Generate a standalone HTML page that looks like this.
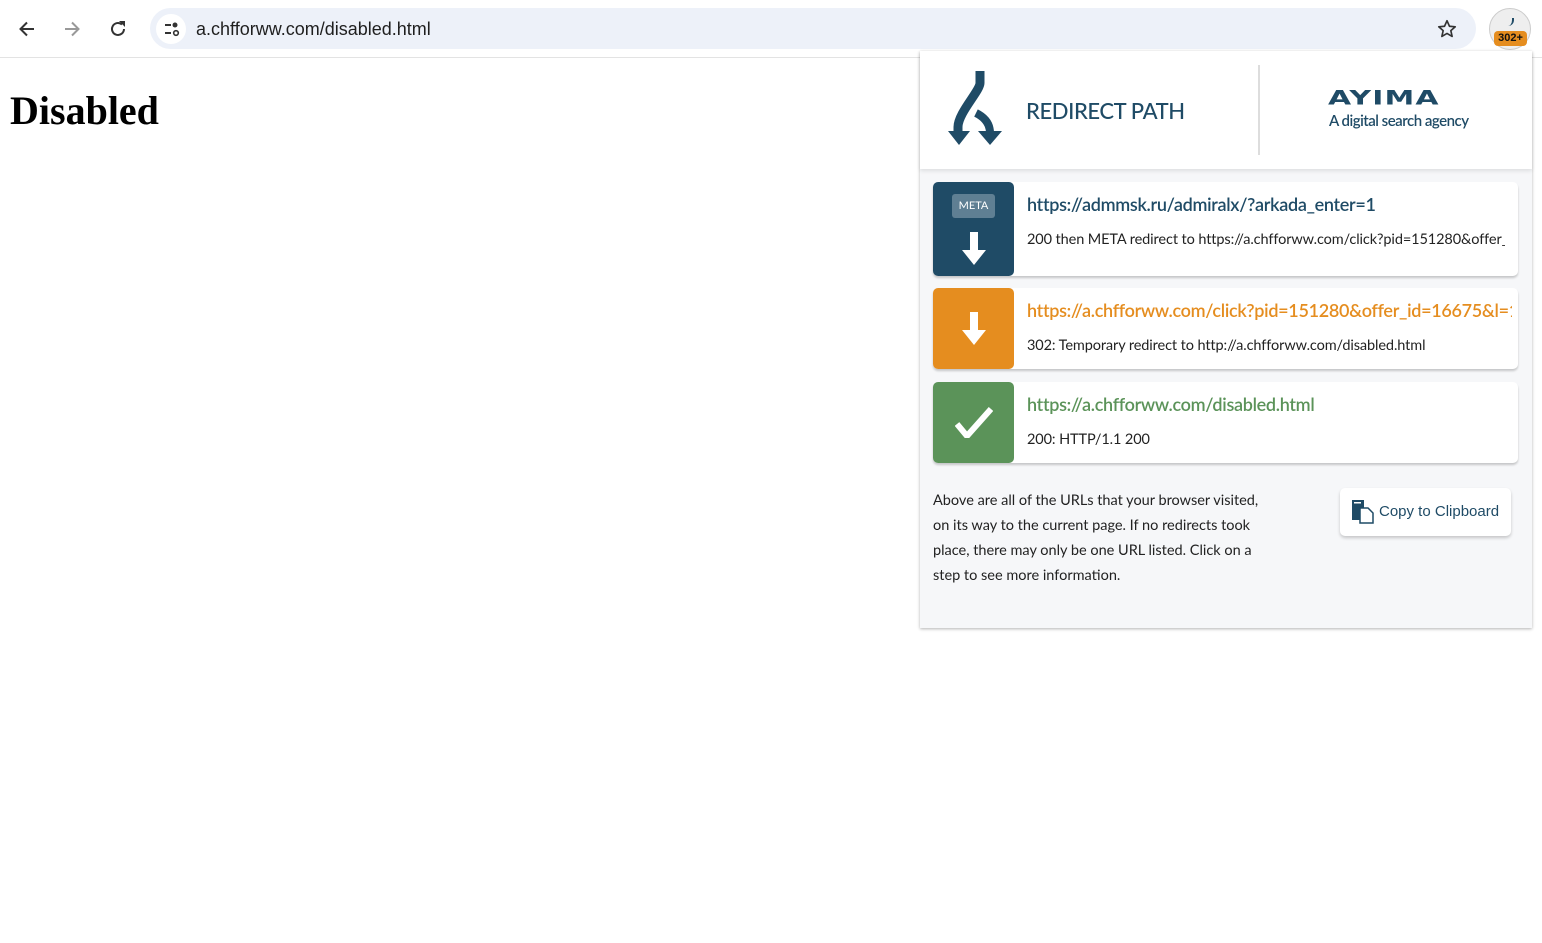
<!DOCTYPE html>
<html><head><style>
*{box-sizing:border-box;margin:0;padding:0}
body{width:1542px;height:943px;background:#fff;font-family:"Liberation Sans",sans-serif;position:relative;overflow:hidden}
.bar{position:absolute;left:0;top:0;width:1542px;height:58px;background:#fff;border-bottom:1px solid #e3e3e3}
.omni{position:absolute;left:150px;top:8px;width:1326px;height:41px;border-radius:21px;background:#edf1f9}
.omni .tune{position:absolute;left:6px;top:6px;width:30px;height:30px;border-radius:15px;background:#fff}
.omni .url{position:absolute;left:46px;top:11px;font-size:18px;color:#1f1f1f}
h1{position:absolute;left:10px;top:87px;font-family:"Liberation Serif",serif;font-size:40px;font-weight:bold}
.pop{position:absolute;left:920px;top:51px;width:612px;height:577px;background:#f6f7f9;box-shadow:0 1px 3px rgba(0,0,0,.3)}
.hdr{position:absolute;left:0;top:0;width:612px;height:118px;background:#fff;box-shadow:0 2px 4px rgba(0,0,0,.1)}
.lato{font-family:"Lato","Liberation Sans",sans-serif}
.card{position:absolute;left:13px;width:585px;background:#fff;border-radius:5px;box-shadow:0 2px 2px rgba(0,0,0,.2)}
.ico{position:absolute;left:0;top:0;width:81px;height:100%;border-radius:5px}
.card .u{position:absolute;left:94px;top:11px;font-size:18px;font-weight:600;letter-spacing:-.3px;white-space:nowrap;width:485px;overflow:hidden}
.card .d{position:absolute;left:94px;font-size:14.5px;letter-spacing:-.1px;color:#222;white-space:nowrap;width:478px;overflow:hidden}
</style></head><body>
<div class="bar">
<svg style="position:absolute;left:17px;top:19px" width="20" height="20" viewBox="0 0 20 20"><path d="M17 10H4M10 3.5L3.5 10 10 16.5" stroke="#333" stroke-width="2" fill="none"/></svg>
<svg style="position:absolute;left:62px;top:19px" width="20" height="20" viewBox="0 0 20 20"><path d="M3 10H16M10 3.5L16.5 10 10 16.5" stroke="#999" stroke-width="2" fill="none"/></svg>
<svg style="position:absolute;left:107px;top:18px" width="22" height="22" viewBox="0 0 22 22"><path d="M17 11a6 6 0 1 1-2-4.5" stroke="#333" stroke-width="2" fill="none"/><path d="M12 3h6v6z" fill="#333"/></svg>
<div class="omni"><div class="tune"><svg width="30" height="30" viewBox="0 0 30 30"><path d="M9 11h6M9 19h6" stroke="#333" stroke-width="2"/><circle cx="19" cy="11" r="2.5" fill="#333"/><circle cx="20" cy="19" r="2.3" stroke="#333" stroke-width="1.6" fill="none"/></svg></div><div class="url">a.chfforww.com/disabled.html</div>
<svg style="position:absolute;left:1286px;top:10px" width="22" height="22" viewBox="0 0 24 24"><path d="M12 3l2.7 6 6.3.6-4.8 4.2 1.4 6.3L12 16.8 6.4 20.1l1.4-6.3L3 9.6 9.3 9z" stroke="#333" stroke-width="1.8" fill="none" stroke-linejoin="round"/></svg></div>
<div style="position:absolute;left:1489px;top:8px;width:42px;height:42px;border-radius:21px;background:#eee;border:1px solid #ccc"></div>
<div style="position:absolute;left:1508px;top:18px;width:6px;height:8px;border-right:2px solid #1f4b66;border-radius:0 0 6px 0"></div>
<div style="position:absolute;left:1494px;top:31px;width:33px;height:15px;border-radius:4px;background:#e58d1f;font-size:11px;font-weight:bold;color:#111;text-align:center;line-height:15px">302+</div>
</div>
<h1>Disabled</h1>
<div class="pop">
<div class="hdr">
<svg style="position:absolute;left:28px;top:18px" width="72" height="78" viewBox="0 0 72 78"><path d="M32 2v12c0 8-22 30-22 44v8" stroke="#1f4b66" stroke-width="9" fill="none"/><path d="M0 62h22L11 76z" fill="#1f4b66"/><path d="M28 44c8 4 14 10 14 20" stroke="#1f4b66" stroke-width="8" fill="none"/><path d="M30 62h24L42 76z" fill="#1f4b66"/></svg>
<div class="lato" style="position:absolute;left:106px;top:46px;font-size:22px;font-weight:500;color:#1f4b66;letter-spacing:-.4px">REDIRECT PATH</div>
<div style="position:absolute;left:338px;top:14px;width:2px;height:90px;background:#ddd"></div>
<div style="position:absolute;left:408px;top:36px;font-size:26px;font-weight:900;color:#1f4b66;letter-spacing:1px;transform:scale(1.15,.75);transform-origin:top left;font-family:'DejaVu Sans',sans-serif">AYIMA</div>
<div class="lato" style="position:absolute;left:409px;top:61px;font-size:15px;font-weight:600;color:#1f4b66;letter-spacing:-.5px">A digital search agency</div>
</div>
<div class="card lato" style="top:131px;height:94px">
<div class="ico" style="background:#1f4b66"><div style="position:absolute;left:19px;top:12px;width:43px;height:24px;border-radius:3px;background:#5f7f93;color:#fff;font-size:11px;text-align:center;line-height:24px">META</div>
<svg style="position:absolute;left:28px;top:50px" width="26" height="34" viewBox="0 0 26 34"><path d="M9 0h8v18h8L13 33 1 18h8z" fill="#fff"/></svg></div>
<div class="u" style="color:#1f4b66">https://admmsk.ru/admiralx/?arkada_enter=1</div>
<div class="d" style="top:49px">200 then META redirect to https://a.chfforww.com/click?pid=151280&amp;offer_id=16675</div>
</div>
<div class="card lato" style="top:237px;height:81px">
<div class="ico" style="background:#e58d1f"><svg style="position:absolute;left:28px;top:24px" width="26" height="34" viewBox="0 0 26 34"><path d="M9 0h8v18h8L13 33 1 18h8z" fill="#fff"/></svg></div>
<div class="u" style="color:#e58d1f">https://a.chfforww.com/click?pid=151280&amp;offer_id=16675&amp;l=1</div>
<div class="d" style="top:49px">302: Temporary redirect to http://a.chfforww.com/disabled.html</div>
</div>
<div class="card lato" style="top:331px;height:81px">
<div class="ico" style="background:#5b9359"><svg style="position:absolute;left:22px;top:24px" width="38" height="32" viewBox="0 0 38 32"><path d="M2 18l10 12L36 3" stroke="#fff" stroke-width="6" fill="none"/></svg></div>
<div class="u" style="color:#5b9359">https://a.chfforww.com/disabled.html</div>
<div class="d" style="top:49px">200: HTTP/1.1 200</div>
</div>
<div class="lato" style="position:absolute;left:13px;top:437px;width:338px;font-size:14.5px;line-height:25px;color:#222">Above are all of the URLs that your browser visited, on its way to the current page. If no redirects took place, there may only be one URL listed. Click on a step to see more information.</div>
<div style="position:absolute;left:420px;top:437px;width:171px;height:48px;background:#fff;border-radius:5px;box-shadow:0 2px 3px rgba(0,0,0,.2)">
<svg style="position:absolute;left:11px;top:12px" width="24" height="24" viewBox="0 0 24 24"><rect x="1" y="0" width="12" height="20" fill="#1f4b66"/><rect x="3" y="2" width="7" height="1.5" fill="#fff"/><path d="M9 8h8l5 5v10H9z" fill="#fff" stroke="#1f4b66" stroke-width="1.5"/></svg>
<div style="position:absolute;left:39px;top:15px;font-size:15px;color:#1f4b66">Copy to Clipboard</div></div>
</div>
</body></html>
